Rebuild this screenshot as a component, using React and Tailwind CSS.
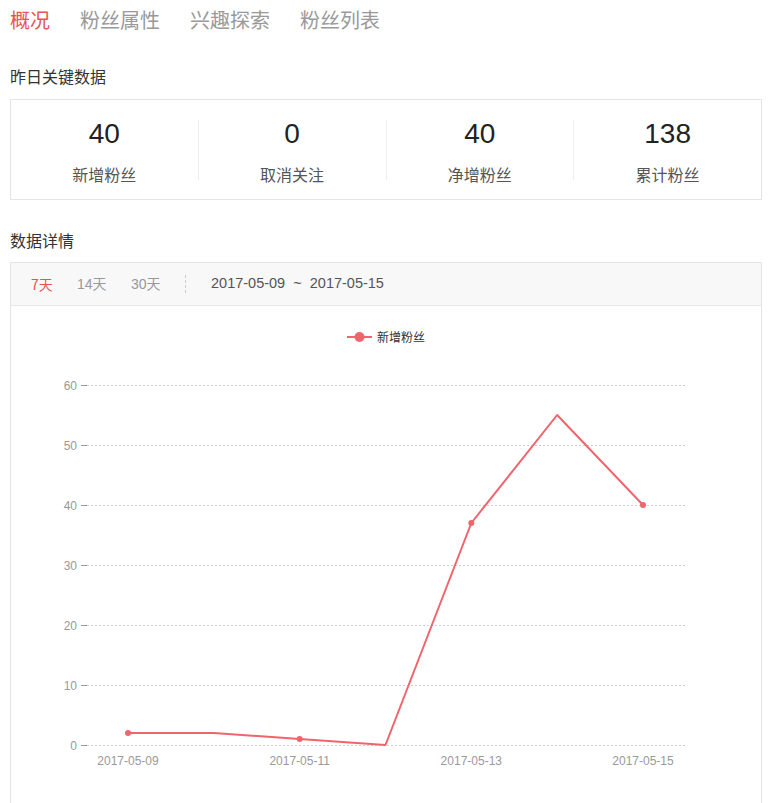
import React from 'react';

const tabs = ['概况', '粉丝属性', '兴趣探索', '粉丝列表'];

const stats = [
  { value: '40', label: '新增粉丝' },
  { value: '0', label: '取消关注' },
  { value: '40', label: '净增粉丝' },
  { value: '138', label: '累计粉丝' },
];

const days = ['2017-05-09', '2017-05-10', '2017-05-11', '2017-05-12', '2017-05-13', '2017-05-14', '2017-05-15'];
const values = [2, 2, 1, 0, 37, 55, 40];

// chart geometry, in page pixels
const x0 = 128;
const step = 85.83;
const yZero = 745;
const unit = 6;

function Chart() {
  const px = (i) => x0 + i * step;
  const py = (v) => yZero - v * unit;
  const points = values.map((v, i) => `${px(i)},${py(v)}`).join(' ');
  const ticks = [0, 10, 20, 30, 40, 50, 60];

  return (
    <svg width="750" height="497" className="block">
      <g transform="translate(-11,-306)" fontFamily="'Liberation Sans', 'Noto Sans CJK SC', sans-serif">
        {/* legend */}
        <line x1="347" y1="337" x2="372" y2="337" stroke="#f0646c" strokeWidth="2" />
        <circle cx="359.5" cy="337" r="5" fill="#f0646c" />
        <text x="377" y="341.5" fontSize="12" fill="#333" fontFamily="'Noto Sans CJK SC', sans-serif">新增粉丝</text>

        {ticks.map((t) => (
          <g key={t}>
            <line x1="87" y1={py(t) + 0.5} x2="685" y2={py(t) + 0.5} stroke="#ccc" strokeDasharray="2 2" />
            <line x1="81" y1={py(t) + 0.5} x2="87" y2={py(t) + 0.5} stroke="#999" />
            <text x="77" y={py(t) + 4.5} fontSize="12" fill="#999" textAnchor="end">{t}</text>
          </g>
        ))}

        {days.map((d, i) =>
          i % 2 === 0 ? (
            <text key={d} x={px(i)} y="765" fontSize="12" fill="#999" textAnchor="middle">{d}</text>
          ) : null
        )}

        <polyline points={points} fill="none" stroke="#f0646c" strokeWidth="2" strokeLinejoin="round" />
        {values.map((v, i) =>
          i % 2 === 0 ? <circle key={i} cx={px(i)} cy={py(v)} r="3" fill="#f0646c" /> : null
        )}
      </g>
    </svg>
  );
}

export default function App() {
  return (
    <div className="w-[773px] h-[803px] overflow-hidden bg-white px-[10px] text-[#333] font-['Noto_Sans_CJK_SC',sans-serif]">
      {/* tabs */}
      <div className="flex gap-[30px] h-[40px] items-center text-[20px] leading-none">
        {tabs.map((t, i) => (
          <span key={t} className={i === 0 ? 'text-[#e9534f]' : 'text-[#999]'}>{t}</span>
        ))}
      </div>

      <div className="mt-[26px] h-[20px] text-[16px] leading-[20px]">昨日关键数据</div>

      <div className="mt-[13px] w-[752px] h-[101px] border border-[#e4e4e4] flex items-center">
        {stats.map((s, i) => (
          <div
            key={s.label}
            className={`flex-1 h-[60px] flex flex-col items-center ${i > 0 ? 'border-l border-[#eee]' : ''}`}
          >
            <div className="text-[28px] leading-none text-[#222] font-['Liberation_Sans',sans-serif] h-[28px] flex items-center">
              {s.value}
            </div>
            <div className="mt-[15px] text-[16px] leading-[22px] text-[#555]">{s.label}</div>
          </div>
        ))}
      </div>

      <div className="mt-[30px] h-[20px] text-[16px] leading-[20px]">数据详情</div>

      <div className="mt-[12px] w-[752px] border border-[#e4e4e4]">
        <div className="h-[43px] bg-[#f8f8f8] border-b border-[#e8e8e8] flex items-center pl-[20px] text-[14px]">
          <span className="text-[#e9534f] w-[46px]">7天</span>
          <span className="text-[#999] w-[54px] font-['Liberation_Sans','Noto_Sans_CJK_SC',sans-serif]">14天</span>
          <span className="text-[#999] w-[54px] font-['Liberation_Sans','Noto_Sans_CJK_SC',sans-serif]">30天</span>
          <span className="h-[18px] border-l border-dashed border-[#ccc] mr-[25px]"></span>
          <span className="text-[#555] text-[14.5px] font-['Liberation_Sans',sans-serif]">2017-05-09&nbsp;&nbsp;~&nbsp;&nbsp;2017-05-15</span>
        </div>
        <Chart />
      </div>
    </div>
  );
}
